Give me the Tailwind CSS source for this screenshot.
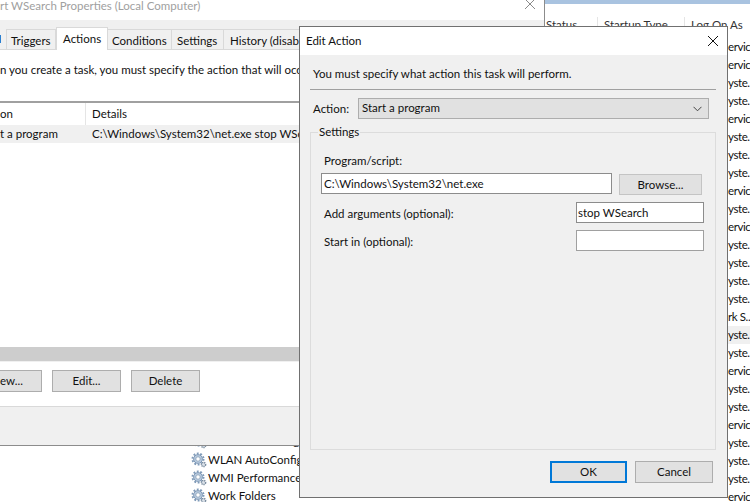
<!DOCTYPE html>
<html><head><meta charset="utf-8"><script src="https://cdn.jsdelivr.net/npm/@tailwindcss/browser@4"></script></head>
<body class="m-0">
<div class="relative w-[750px] h-[502px] overflow-hidden bg-white font-['Lato','Open_Sans',sans-serif] text-[11.5px] leading-[16px] text-[#111]">

  <!-- services window behind -->
  <div class="absolute inset-0 flex flex-col">
    <div class="h-[4px] bg-[#a9c3e0]"></div>
    <div class="relative flex h-[22px] pl-[546px] pt-[14px] text-[#333]">
      <span class="w-[52px] border-r border-[#e5e5e5] h-[20px] -mt-[1px] -mb-[4px]">Status</span>
      <span class="w-[87px] border-r border-[#e5e5e5] pl-[6px] h-[20px] -mt-[1px]">Startup Type</span>
      <span class="pl-[6px] -mt-[1px]">Log On As</span>
    </div>
    <div class="flex flex-col pl-[728px] pt-[12px] whitespace-nowrap overflow-hidden tracking-[-0.4px]">
      <span class="h-[18px] leading-[18px]">ervic</span><span class="h-[18px] leading-[18px]">ervic</span><span class="h-[18px] leading-[18px]">yste.</span><span class="h-[18px] leading-[18px]">yste.</span><span class="h-[18px] leading-[18px]">ervic</span><span class="h-[18px] leading-[18px]">yste.</span><span class="h-[18px] leading-[18px]">yste.</span><span class="h-[18px] leading-[18px]">yste.</span><span class="h-[18px] leading-[18px]">ervic</span><span class="h-[18px] leading-[18px]">yste.</span><span class="h-[18px] leading-[18px]">ervic</span><span class="h-[18px] leading-[18px]">yste.</span><span class="h-[18px] leading-[18px]">yste.</span><span class="h-[18px] leading-[18px]">yste.</span><span class="h-[18px] leading-[18px]">yste.</span><span class="h-[18px] leading-[18px]">rk S..</span><span class="h-[18px] leading-[18px] bg-[#f0f0f0]">yste.</span><span class="h-[18px] leading-[18px]">yste.</span><span class="h-[18px] leading-[18px]">ervic</span><span class="h-[18px] leading-[18px]">yste.</span><span class="h-[18px] leading-[18px]">yste.</span><span class="h-[18px] leading-[18px]">ervic</span><span class="h-[18px] leading-[18px]">yste.</span><span class="h-[18px] leading-[18px]">yste.</span><span class="h-[18px] leading-[18px]">yste.</span><span class="h-[18px] leading-[18px]">ervic</span>
    </div>
  </div>

  <!-- service names under the back dialog -->
  <div class="absolute left-[191px] top-[432px] flex flex-col whitespace-nowrap">
    <div class="flex items-center gap-[1px] h-[18px]"><svg class="w-[16px] h-[16px]" viewBox="0 0 16 16"><circle cx="7" cy="7" r="5.6" fill="none" stroke="#7f9ab8" stroke-width="1.8" stroke-dasharray="1.9 1.6"/><circle cx="7" cy="7" r="4.4" fill="#b9cbdf" stroke="#6b88a8" stroke-width=".8"/><circle cx="7" cy="7" r="2.2" fill="#fff" stroke="#7d96b0" stroke-width=".7"/><circle cx="12.5" cy="12.5" r="2.1" fill="#dde3ea" stroke="#76899c" stroke-width="1.5" stroke-dasharray="1.2 .7"/></svg><span>Wired AutoConfig</span></div>
    <div class="flex items-center gap-[1px] h-[18px] mt-[1px]"><svg class="w-[16px] h-[16px]" viewBox="0 0 16 16"><circle cx="7" cy="7" r="5.6" fill="none" stroke="#7f9ab8" stroke-width="1.8" stroke-dasharray="1.9 1.6"/><circle cx="7" cy="7" r="4.4" fill="#b9cbdf" stroke="#6b88a8" stroke-width=".8"/><circle cx="7" cy="7" r="2.2" fill="#fff" stroke="#7d96b0" stroke-width=".7"/><circle cx="12.5" cy="12.5" r="2.1" fill="#dde3ea" stroke="#76899c" stroke-width="1.5" stroke-dasharray="1.2 .7"/></svg><span>WLAN AutoConfig</span></div>
    <div class="flex items-center gap-[1px] h-[18px]"><svg class="w-[16px] h-[16px]" viewBox="0 0 16 16"><circle cx="7" cy="7" r="5.6" fill="none" stroke="#7f9ab8" stroke-width="1.8" stroke-dasharray="1.9 1.6"/><circle cx="7" cy="7" r="4.4" fill="#b9cbdf" stroke="#6b88a8" stroke-width=".8"/><circle cx="7" cy="7" r="2.2" fill="#fff" stroke="#7d96b0" stroke-width=".7"/><circle cx="12.5" cy="12.5" r="2.1" fill="#dde3ea" stroke="#76899c" stroke-width="1.5" stroke-dasharray="1.2 .7"/></svg><span>WMI Performance</span></div>
    <div class="flex items-center gap-[1px] h-[18px]"><svg class="w-[16px] h-[16px]" viewBox="0 0 16 16"><circle cx="7" cy="7" r="5.6" fill="none" stroke="#7f9ab8" stroke-width="1.8" stroke-dasharray="1.9 1.6"/><circle cx="7" cy="7" r="4.4" fill="#b9cbdf" stroke="#6b88a8" stroke-width=".8"/><circle cx="7" cy="7" r="2.2" fill="#fff" stroke="#7d96b0" stroke-width=".7"/><circle cx="12.5" cy="12.5" r="2.1" fill="#dde3ea" stroke="#76899c" stroke-width="1.5" stroke-dasharray="1.2 .7"/></svg><span>Work Folders</span></div>
  </div>

  <!-- back dialog -->
  <div class="absolute left-0 top-0 w-[545px] h-[446px] bg-white border-r border-b border-[#8c8c8c] flex flex-col whitespace-nowrap overflow-hidden">
    <div class="relative h-[20px] shrink-0 text-[#a0a0a0]">
      <span class="absolute -top-[2px] left-0 leading-[16px]">rt WSearch Properties (Local Computer)</span>
      <svg class="absolute left-[524px] top-0 w-[12px] h-[10px]" viewBox="0 0 12 10"><path d="M1 -1 L11 9 M11 -1 L1 9" stroke="#8a8a8a" fill="none"/></svg>
    </div>
    <div class="h-[30px] shrink-0 bg-[#f0f0f0] flex items-end border-b border-[#d9d9d9]">
      <div class="w-[7px] h-[20px] bg-[#f0f0f0] border-r border-[#d9d9d9] relative"><span class="absolute left-0 top-[6px] w-[1px] h-[8px] bg-[#2a7fd0]"></span></div>
      <div class="w-[49px] h-[20px] pl-[4px] border-r border-t border-[#d9d9d9] pt-[3px]">Triggers</div>
      <div class="w-[52px] h-[23px] -mb-[1px] pl-[6px] bg-white border-x border-t border-[#d9d9d9] pt-[3px]">Actions</div>
      <div class="w-[64px] h-[20px] pl-[4px] border-r border-t border-[#d9d9d9] pt-[3px]">Conditions</div>
      <div class="w-[52px] h-[20px] pl-[5px] border-r border-t border-[#d9d9d9] pt-[3px]">Settings</div>
      <div class="w-[80px] h-[20px] pl-[6px] border-t border-[#d9d9d9] pt-[3px]">History (disabled)</div>
    </div>
    <div class="h-[51px] shrink-0 pt-[12px]">n you create a task, you must specify the action that will occur</div>
    <div class="h-[24px] shrink-0 flex border-t-2 border-[#a0a0a0]">
      <div class="w-[86px] border-r border-[#e5e5e5] pt-[3px]">on</div>
      <div class="pl-[6px] pt-[3px]">Details</div>
    </div>
    <div class="h-[18px] shrink-0 bg-[#f0f0f0] flex leading-[18px]">
      <div class="w-[92px]">t a program</div>
      <div>C:\Windows\System32\net.exe stop WSearch</div>
    </div>
    <div class="h-[204px] shrink-0"></div>
    <div class="h-[15px] shrink-0 bg-[#cdcdcd] border-b border-[#f0f0f0]"></div>
    <div class="h-[44px] shrink-0 flex items-start pt-[8px] gap-[10px]">
      <button class="w-[42px] h-[22px] bg-[#e1e1e1] border border-[#adadad] border-l-0 text-right pr-[19px] leading-[20px]">ew...</button>
      <button class="w-[69px] h-[22px] bg-[#e1e1e1] border border-[#adadad] leading-[20px]">Edit...</button>
      <button class="w-[69px] h-[22px] bg-[#e1e1e1] border border-[#adadad] leading-[20px]">Delete</button>
    </div>
    <div class="flex-1 bg-[#f0f0f0] border-t border-[#d9d9d9]"></div>
  </div>

  <!-- front dialog -->
  <div class="absolute left-[299px] top-[26px] w-[429px] h-[472px] bg-[#f0f0f0] border border-[#707070] flex flex-col whitespace-nowrap">
    <div class="h-[28px] shrink-0 bg-white flex items-center justify-between pl-[6px] pr-[8px]">
      <span class="pb-[1px]">Edit Action</span>
      <svg class="w-[12px] h-[12px]" viewBox="0 0 12 12"><path d="M1 1 L11 11 M11 1 L1 11" stroke="#111" fill="none" stroke-width="1"/></svg>
    </div>
    <div class="flex-1 flex flex-col px-[10px]">
      <div class="h-[35px] pt-[11px] pl-[3px] shrink-0 border-b border-[#a0a0a0] mr-[1px]">You must specify what action this task will perform.</div>
      <div class="flex items-center h-[21px] mt-[8px] shrink-0 pl-[3px]">
        <span class="w-[45px] pt-[1px]">Action:</span>
        <div class="flex-1 mr-[8px] h-[21px] bg-[#e1e1e1] border border-[#adadad] flex items-center justify-between pl-[3px] pr-[6px]"><span class="pb-[1px]">Start a program</span>
          <svg class="w-[9px] h-[6px]" viewBox="0 0 9 6"><path d="M.5 .8 L4.5 4.8 L8.5 .8" stroke="#444" fill="none"/></svg></div>
      </div>
      <div class="relative mt-[13px] h-[318px] shrink-0 border border-[#dcdcdc] mr-[1px] flex flex-col">
        <span class="absolute left-[7px] -top-[9px] bg-[#f0f0f0] px-[1px]">Settings</span>
        <div class="pl-[13px] pt-[20px] h-[40px] shrink-0">Program/script:</div>
        <div class="flex items-start pl-[10px] gap-[7px] h-[29px] shrink-0">
          <div class="w-[291px] h-[21px] bg-white border border-[#8c8c8c] pl-[2px] leading-[19px]">C:\Windows\System32\net.exe</div>
          <button class="w-[83px] h-[21px] mt-[1px] bg-[#e1e1e1] border border-[#c4c4c4] leading-[19px]">Browse...</button>
        </div>
        <div class="flex items-center justify-between pl-[13px] pr-[11px] h-[21px] shrink-0">
          <span class="pt-[3px]">Add arguments (optional):</span>
          <div class="w-[128px] h-[21px] bg-white border border-[#8c8c8c] pl-[1px] leading-[19px]">stop WSearch</div>
        </div>
        <div class="flex items-center justify-between pl-[13px] pr-[11px] h-[21px] mt-[7px] shrink-0">
          <span class="pt-[2px]">Start in (optional):</span>
          <div class="w-[128px] h-[21px] bg-white border border-[#a0a0a0]"></div>
        </div>
      </div>
      <div class="flex justify-end gap-[8px] mt-[11px] pr-[4px]">
        <button class="w-[77px] h-[22px] bg-[#e1e1e1] border-2 border-[#0078d7] leading-[18px]">OK</button>
        <button class="w-[78px] h-[22px] bg-[#e1e1e1] border border-[#adadad] leading-[20px]">Cancel</button>
      </div>
    </div>
  </div>
</div>
</body></html>
